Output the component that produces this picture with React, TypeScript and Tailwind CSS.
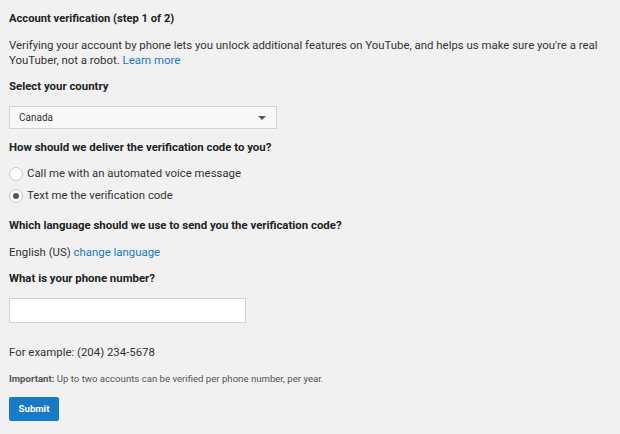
import React, { useState } from 'react';

export default function App() {
  const [method, setMethod] = useState<'call' | 'text'>('text');
  const [phone, setPhone] = useState('');

  return (
    <div className="min-h-[434px] w-[620px] bg-[#f1f1f1] px-[9px] pt-[11px] text-[11.4px] text-[#333] font-['Roboto',sans-serif]">
      <h2 className="h-4 leading-4 text-[11.2px] font-bold text-[#222]">Account verification (step 1 of 2)</h2>

      <p className="mt-[11px] leading-[15px] text-[#333]">
        Verifying your account by phone lets you unlock additional features on YouTube, and helps us make sure you're a real
        YouTuber, not a robot. <a href="#" className="text-[#167ac6]">Learn more</a>
      </p>

      <div className="mt-[10px] h-4 leading-4 font-bold text-[#222]">Select your country</div>

      <div className="mt-3 flex h-[23px] w-[268px] items-center justify-between border border-[#d3d3d3] bg-[#f8f8f8] pl-[9px] pr-[10px] text-[10px] text-[#333]">
        <span>Canada</span>
        <span className="h-0 w-0 border-x-[4px] border-t-[4px] border-x-transparent border-t-[#555]" />
      </div>

      <div className="mt-[10px] h-4 leading-4 font-bold text-[#222]">How should we deliver the verification code to you?</div>

      <div className="mt-[9px] flex flex-col gap-[2px]">
        {[
          { id: 'call', label: 'Call me with an automated voice message' },
          { id: 'text', label: 'Text me the verification code' },
        ].map(opt => (
          <label key={opt.id} className="flex h-5 cursor-pointer items-center gap-[4px]" onClick={() => setMethod(opt.id as 'call' | 'text')}>
            <span className="flex h-[14px] w-[14px] items-center justify-center rounded-full border border-[#c6c6c6] bg-white">
              {method === opt.id && <span className="h-[6px] w-[6px] rounded-full bg-[#555]" />}
            </span>
            <span>{opt.label}</span>
          </label>
        ))}
      </div>

      <div className="mt-[11px] h-4 leading-4 font-bold text-[#222]">Which language should we use to send you the verification code?</div>

      <div className="mt-[11px] h-4 leading-4">
        English (US) <a href="#" className="text-[#167ac6]">change language</a>
      </div>

      <div className="mt-[10px] h-4 leading-4 font-bold text-[#222]">What is your phone number?</div>

      <input
        type="tel"
        value={phone}
        onChange={e => setPhone(e.target.value)}
        className="mt-3 block h-[25px] w-[237px] border border-[#d3d3d3] bg-white px-2 text-[11.4px] outline-none"
      />

      <div className="mt-[21px] h-4 leading-4">For example: (204) 234-5678</div>

      <div className="mt-3 h-[14px] text-[9.6px] leading-[14px] text-[#555]">
        <span className="font-bold">Important:</span> Up to two accounts can be verified per phone number, per year.
      </div>

      <button
        type="button"
        className="mt-[11px] h-6 w-[50px] rounded-[2px] bg-[#167ac6] text-[9.6px] font-bold text-white"
      >
        Submit
      </button>
    </div>
  );
}
